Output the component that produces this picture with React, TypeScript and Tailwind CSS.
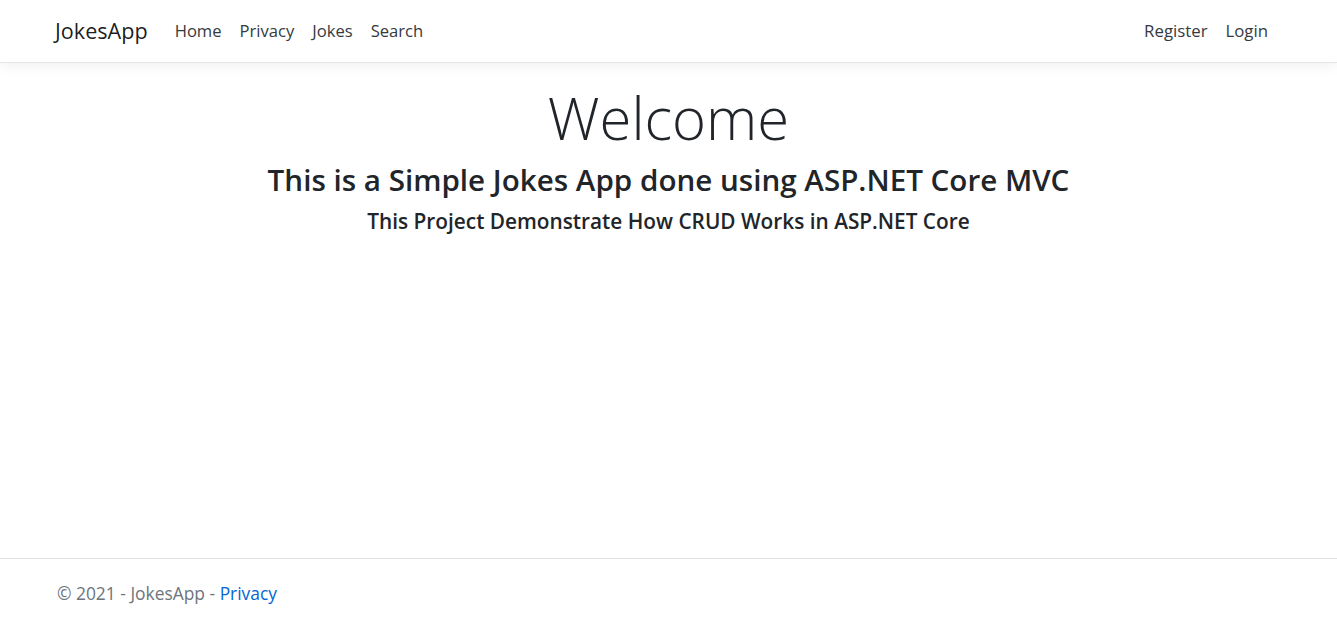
import React from "react";

const font = { fontFamily: '"Open Sans", "Noto Sans", Arial, sans-serif' };

export default function App() {
  return (
    <div
      className="flex min-h-screen flex-col bg-white text-[#212529]"
      style={font}
    >
      {/* NAVBAR */}
      <header className="h-[63px] border-b border-[#e5e5e5] bg-white shadow-[0_4px_12px_rgba(0,0,0,0.05)]">
        <nav className="flex h-full items-center justify-between px-[55px]">
          <div className="flex items-center">
            <a className="mr-[18px] text-[21.6px] text-black/90">JokesApp</a>
            <ul className="flex items-center text-[16.6px] text-[#343a40]">
              <li><a className="px-[9px]">Home</a></li>
              <li><a className="px-[9px]">Privacy</a></li>
              <li><a className="px-[9px]">Jokes</a></li>
              <li><a className="px-[9px]">Search</a></li>
            </ul>
          </div>
          <ul className="flex items-center pr-[5px] text-[16.8px] text-[#343a40]">
            <li><a className="px-[9px]">Register</a></li>
            <li><a className="px-[9px]">Login</a></li>
          </ul>
        </nav>
      </header>

      {/* MAIN */}
      <main className="flex-1 px-[55px] pt-[18px] text-center">
        <h1 className="text-[58px] font-light leading-[74px]">Welcome</h1>
        <h3 className="mt-[7px] text-[29.6px] font-semibold leading-[36px]">
          This is a Simple Jokes App done using ASP.NET Core MVC
        </h3>
        <h5 className="mt-[9px] text-[20.8px] font-semibold leading-[28px]">
          This Project Demonstrate How CRUD Works in ASP.NET Core
        </h5>
      </main>

      {/* FOOTER */}
      <footer className="h-[61px] border-t border-[#dee2e6] px-[57px] pt-[23px] text-[17.4px] leading-[22px] text-[#6c757d]">
        © 2021 - JokesApp - <a className="text-[#0366d6]">Privacy</a>
      </footer>
    </div>
  );
}
